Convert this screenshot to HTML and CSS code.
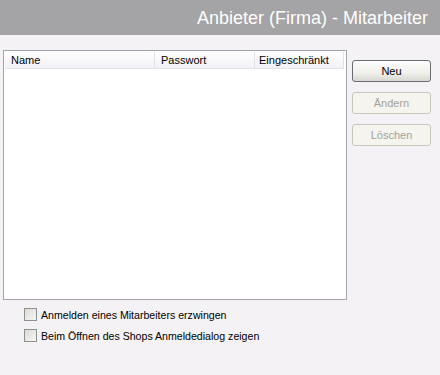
FILE: index.html
```html
<!DOCTYPE html>
<html lang="de">
<head>
    <meta charset="UTF-8">
    <title>Anbieter (Firma) - Mitarbeiter</title>
    <link rel="stylesheet" href="styles.css">
</head>
<body>
    <div class="titlebar">Anbieter (Firma) - Mitarbeiter</div>

    <div class="content">
        <div class="main">
            <div class="list">
                <div class="list-head">
                    <div class="col col-name">Name</div>
                    <div class="col col-pass">Passwort</div>
                    <div class="col col-restr">Eingeschränkt</div>
                </div>
            </div>
            <div class="buttons">
                <button class="btn default">Neu</button>
                <button class="btn" disabled>Ändern</button>
                <button class="btn" disabled>Löschen</button>
            </div>
        </div>

        <div class="options">
            <label class="check"><span class="box"></span>Anmelden eines Mitarbeiters erzwingen</label>
            <label class="check"><span class="box"></span>Beim Öffnen des Shops Anmeldedialog zeigen</label>
        </div>
    </div>
</body>
</html>
```

FILE: styles.css
```css
body {
    margin: 0;
    width: 440px;
    height: 375px;
    background-color: #f5f2f5;
    font-family: "Liberation Sans", Arial, sans-serif;
    font-size: 11px;
    color: #000;
    overflow: hidden;
}

.titlebar {
    height: 35px;
    background-color: #a4a3a5;
    color: #fff;
    font-size: 18px;
    text-align: right;
    padding-right: 12px;
    line-height: 37px;
    box-sizing: border-box;
}

.content {
    padding: 15px 0 0 3px;
}

.main {
    display: flex;
    align-items: flex-start;
}

.list {
    width: 344px;
    height: 250px;
    border: 1px solid #a5a2ab;
    background-color: #fff;
    box-sizing: border-box;
    padding: 1px 2px 0 1px;
}

.list-head {
    display: flex;
    height: 16px;
    background: linear-gradient(#ffffff, #f1f1f6);
    border-bottom: 1px solid #e3e3ea;
}

.col {
    line-height: 17px;
    padding-left: 6px;
    box-sizing: border-box;
    border-right: 1px solid #e0e0e6;
}

.col-name { width: 150px; }
.col-pass { width: 100px; }
.col-restr { width: 89px; padding-left: 4px; }

.buttons {
    display: flex;
    flex-direction: column;
    gap: 10px;
    margin-left: 5px;
    margin-top: 10px;
}

.btn {
    width: 79px;
    height: 22px;
    border: 1px solid #c9c7ba;
    border-radius: 3px;
    background: #f5f4ef;
    font-family: "Liberation Sans", Arial, sans-serif;
    font-size: 11px;
    color: #a3a198;
    padding: 0;
}

.btn.default {
    border-color: #6b6b72;
    background: linear-gradient(#fdfdfd, #f0f0ec 60%, #d8d8d2);
    color: #000;
}

.options {
    display: flex;
    flex-direction: column;
    gap: 8px;
    padding: 8px 0 0 21px;
    font-size: 10.6px;
}

.check {
    display: flex;
    align-items: center;
    height: 13px;
}

.box {
    width: 11px;
    height: 11px;
    border: 1px solid #8e8f8f;
    background: linear-gradient(135deg, #dcdcd6, #f6f6f4);
    margin-right: 4px;
}
```
